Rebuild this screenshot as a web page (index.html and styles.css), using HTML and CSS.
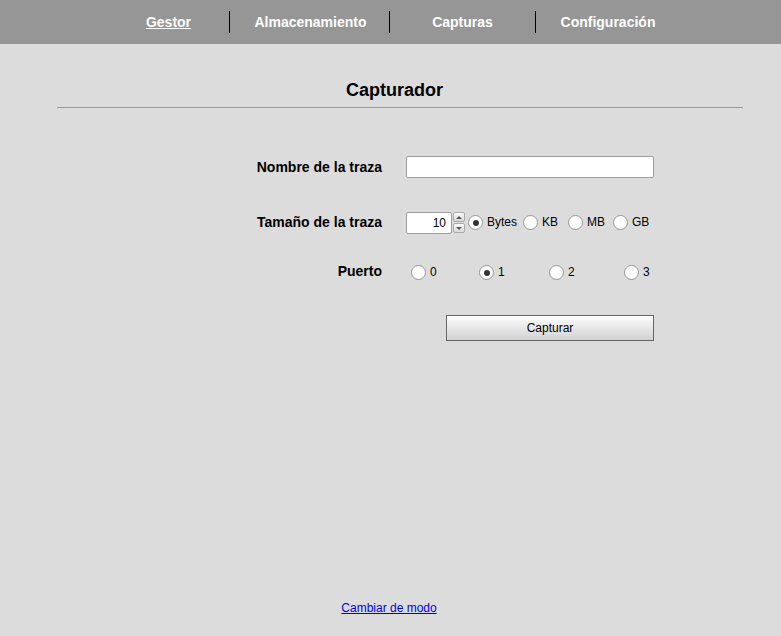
FILE: index.html
```html
<!DOCTYPE html>
<html lang="es">
<head>
<meta charset="utf-8">
<title>Capturador</title>
<link rel="stylesheet" href="styles.css">
</head>
<body>
<nav class="nav">
  <a class="nav-item nav-gestor active" href="#">Gestor</a>
  <a class="nav-item nav-alm" href="#">Almacenamiento</a>
  <a class="nav-item nav-cap" href="#">Capturas</a>
  <a class="nav-item nav-conf" href="#">Configuración</a>
</nav>
<main class="main">
  <header class="header"><h1 class="title">Capturador</h1></header>
  <form class="form">
    <label class="label" for="nombre">Nombre de la traza</label>
    <div class="control"><input class="text-input" id="nombre" type="text"></div>

    <label class="label" for="tam">Tamaño de la traza</label>
    <div class="control size-row">
      <input class="num-input" id="tam" type="text" value="10">
      <span class="spinner"><span class="spin spin-up"></span><span class="spin spin-down"></span></span>
      <label class="opt"><input class="radio" type="radio" name="unit" checked><span class="opt-text">Bytes</span></label>
      <label class="opt"><input class="radio" type="radio" name="unit"><span class="opt-text">KB</span></label>
      <label class="opt"><input class="radio" type="radio" name="unit"><span class="opt-text">MB</span></label>
      <label class="opt"><input class="radio" type="radio" name="unit"><span class="opt-text">GB</span></label>
    </div>

    <span class="label">Puerto</span>
    <div class="control port-row">
      <label class="opt"><input class="radio" type="radio" name="port"><span class="opt-text">0</span></label>
      <label class="opt"><input class="radio" type="radio" name="port" checked><span class="opt-text">1</span></label>
      <label class="opt"><input class="radio" type="radio" name="port"><span class="opt-text">2</span></label>
      <label class="opt"><input class="radio" type="radio" name="port"><span class="opt-text">3</span></label>
    </div>

    <span class="label"></span>
    <div class="control"><button class="btn" type="button">Capturar</button></div>
  </form>
  <footer class="footer"><a class="mode-link" href="#">Cambiar de modo</a></footer>
</main>
</body>
</html>
```
FILE: styles.css
```css
* { box-sizing: border-box; }
html, body { margin: 0; padding: 0; }
body {
  background: #dcdcdc;
  font-family: "Liberation Sans", Arial, sans-serif;
  color: #000;
  min-height: 636px;
}
.nav {
  height: 44px;
  background: #969696;
  display: flex;
  align-items: center;
  padding-left: 108px;
}
.nav-item {
  height: 22px;
  line-height: 22px;
  text-align: center;
  color: #fff;
  font-weight: bold;
  font-size: 14px;
  text-decoration: none;
}
.nav-item + .nav-item { border-left: 1px solid #000; }
.nav-gestor { width: 121px; }
.nav-alm { width: 160px; padding-left: 2px; }
.nav-cap { width: 146px; }
.nav-conf { width: 145px; }
.nav-item.active { text-decoration: underline; }

.header {
  margin: 36px 38px 0 57px;
  padding-bottom: 6px;
  border-bottom: 1px solid #9a9a9a;
}
.title {
  margin: 0;
  font-size: 18px;
  line-height: 21px;
  font-weight: bold;
  text-align: center;
  padding-right: 11px;
}
.form {
  margin-top: 38px;
  display: grid;
  grid-template-columns: 382px 260px;
  grid-template-rows: 41px 70px 28px 86px;
  column-gap: 24px;
  align-items: center;
}
.label {
  text-align: right;
  font-weight: bold;
  font-size: 14px;
}
.control { display: flex; align-items: center; }
.text-input {
  width: 248px;
  height: 22px;
  border: 1px solid #a0a0a0;
  border-radius: 2px;
  background: #fff;
  margin: 0;
  padding: 0 4px;
  font: 12px "Liberation Sans", Arial, sans-serif;
  outline: none;
}
.num-input {
  width: 46px;
  height: 22px;
  border: 1px solid #a0a0a0;
  border-radius: 2px;
  background: #fff;
  margin: 0;
  padding: 0 5px 0 2px;
  text-align: right;
  font: 12px "Liberation Sans", Arial, sans-serif;
  outline: none;
}
.spinner {
  display: flex;
  flex-direction: column;
  margin-left: 1px;
  gap: 1px;
}
.spin {
  width: 12px;
  height: 10px;
  border: 1px solid #aaa;
  border-radius: 2px;
  background: linear-gradient(#fafafa, #d8d8d8);
  display: flex;
  align-items: center;
  justify-content: center;
}
.spin::after {
  content: "";
  width: 0; height: 0;
  border-left: 3px solid transparent;
  border-right: 3px solid transparent;
}
.spin-up::after { border-bottom: 3px solid #555; }
.spin-down::after { border-top: 3px solid #555; }

.opt {
  display: flex;
  align-items: center;
  font-size: 12px;
}
.opt-text { margin-bottom: 2px; }
.radio {
  appearance: none;
  -webkit-appearance: none;
  width: 15px;
  height: 15px;
  margin: 0 4px 0 0;
  border: 1px solid #999;
  border-radius: 50%;
  background: radial-gradient(circle at 50% 40%, #ffffff 60%, #ededed 100%);
  display: flex;
  align-items: center;
  justify-content: center;
}
.radio:checked::after {
  content: "";
  width: 6px;
  height: 6px;
  border-radius: 50%;
  background: #333;
}
.size-row { padding-top: 1px; }
.size-row .spinner { margin-right: 3px; }
.size-row .opt + .opt { margin-left: 6px; }
.size-row .opt:nth-of-type(3) { margin-left: 10px; }
.size-row .opt:nth-of-type(4) { margin-left: 8px; }

.port-row {
  display: grid;
  grid-template-columns: 68px 70px 75px auto;
  padding-left: 5px;
  padding-top: 3px;
}
.btn {
  margin-left: 40px;
  width: 208px;
  height: 26px;
  border: 1px solid #666;
  border-radius: 0;
  background: linear-gradient(#fdfdfd, #d2d2d2);
  font: 12px "Liberation Sans", Arial, sans-serif;
  color: #000;
  padding: 0;
}
.footer {
  margin-top: 227px;
  text-align: center;
  padding-right: 3px;
}
.mode-link {
  font-size: 12px;
  color: #0000ee;
}
```
